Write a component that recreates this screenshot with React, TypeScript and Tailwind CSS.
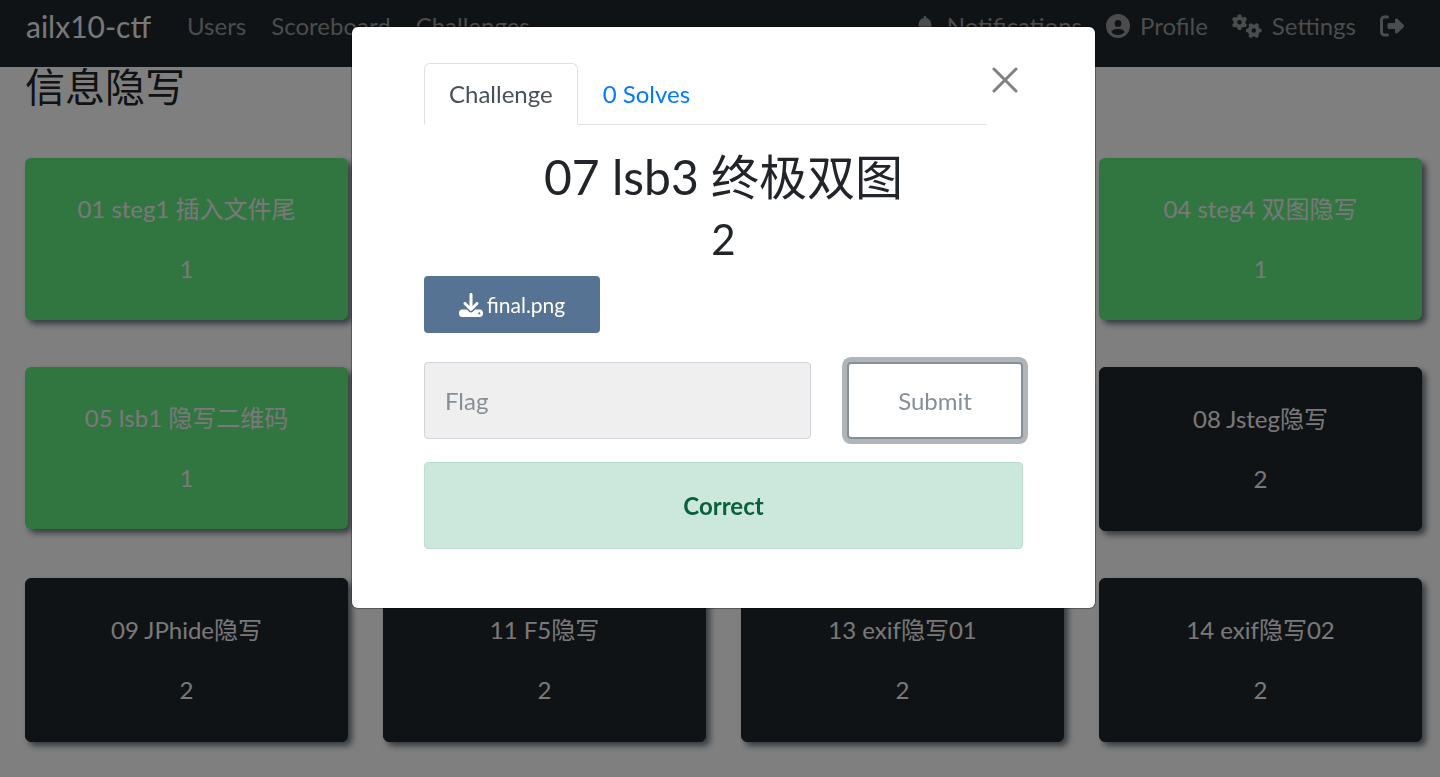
import React from "react";
import {
  FaBell,
  FaCircleUser,
  FaDownload,
  FaGears,
  FaRightFromBracket,
} from "react-icons/fa6";

type Challenge = {
  name: string;
  value: number;
  solved?: boolean;
  place?: string;
};

const challenges: Challenge[] = [
  { name: "01 steg1 插入文件尾", value: 1, solved: true },
  { name: "04 steg4 双图隐写", value: 1, solved: true, place: "col-start-4" },
  { name: "05 lsb1 隐写二维码", value: 1, solved: true },
  { name: "08 Jsteg隐写", value: 2, place: "col-start-4" },
  { name: "09 JPhide隐写", value: 2 },
  { name: "11 F5隐写", value: 2 },
  { name: "13 exif隐写01", value: 2 },
  { name: "14 exif隐写02", value: 2 },
];

function Navbar() {
  return (
    <nav className="flex h-[67px] items-start justify-between bg-[#1f262a] pr-9 pl-[26px] text-2xl leading-9 text-[#96999b]">
      <div className="flex items-center pt-2">
        <a href="#home" className="mr-6 text-[30px] text-[#f0f0f0]">
          ailx10-ctf
        </a>
        <div className="flex gap-[25px] pl-3">
          <a href="#users">Users</a>
          <a href="#scoreboard">Scoreboard</a>
          <a href="#challenges">Challenges</a>
        </div>
      </div>
      <div className="flex items-center gap-6 pt-2">
        <a href="#notifications" className="flex items-center gap-3">
          <FaBell className="size-5" />
          Notifications
        </a>
        <a href="#profile" className="flex items-center gap-2.5">
          <FaCircleUser />
          Profile
        </a>
        <a href="#settings" className="flex items-center gap-2.5">
          <FaGears className="size-[30px]" />
          Settings
        </a>
        <a href="#logout" aria-label="Logout">
          <FaRightFromBracket />
        </a>
      </div>
    </nav>
  );
}

function ChallengeCard({ name, value, solved, place = "" }: Challenge) {
  const tone = solved ? "bg-[#62ec80]" : "border border-[#1f262a] bg-[#1f262a]";
  return (
    <button
      type="button"
      className={`flex flex-col items-center gap-6 rounded-md py-[33px] text-2xl leading-9 text-[#f4f0f4] shadow-[4px_4px_6px_#6c7680] ${tone} ${place}`}
    >
      <span>{name}</span>
      <span>{value}</span>
    </button>
  );
}

function ChallengeDialog() {
  return (
    <div className="fixed inset-0 flex items-start justify-center bg-black/50 pt-[27px] pl-[7px]">
      <div
        role="dialog"
        aria-modal="true"
        aria-labelledby="challenge-name"
        className="w-full max-w-[743px] rounded-md bg-white px-[72px] pt-9 pb-[59px] text-2xl leading-9 text-[#212529] shadow-[0_0_0_1px_rgba(0,0,0,0.3)]"
      >
        <div className="flex items-start">
          <div role="tablist" className="flex flex-1 border-b border-[#dee2e6]">
            <button
              type="button"
              role="tab"
              aria-selected="true"
              className="-mb-px rounded-t-md border border-b-white border-[#dee2e6] px-6 py-3 text-[#495057]"
            >
              Challenge
            </button>
            <button
              type="button"
              role="tab"
              aria-selected="false"
              className="px-[25px] py-3 text-[#007bff]"
            >
              0 Solves
            </button>
          </div>
          <button type="button" aria-label="Close" className="flex w-9 justify-center pt-1">
            <svg viewBox="0 0 26 26" className="size-[26px]" fill="none" stroke="#808080" strokeWidth="3" strokeLinecap="round">
              <path d="M2 2L24 24M24 2L2 24" />
            </svg>
          </button>
        </div>

        <h2 id="challenge-name" className="pt-[22px] text-center text-5xl leading-[60px]">
          07 lsb3 终极双图
        </h2>
        <p className="pt-px pb-[5px] text-center text-[42px] leading-[63px]">2</p>

        <a
          href="#final.png"
          className="flex h-[57px] w-44 items-center justify-center gap-1 rounded-sm bg-[#577393] text-[21px] text-white"
        >
          <FaDownload className="size-6" />
          final.png
        </a>

        <div className="flex gap-9 pt-[29px]">
          <input
            type="text"
            aria-label="Flag"
            placeholder="Flag"
            className="h-[77px] min-w-0 flex-1 rounded-sm border border-[#ced4da] bg-[#efefef] px-5 placeholder:text-[#868e96]"
          />
          <button
            type="button"
            className="h-[77px] w-44 rounded-sm border-2 border-[#868e96] bg-white text-[#868e96] shadow-[0_0_0_5px_#b0b5ba]"
          >
            Submit
          </button>
        </div>

        <div
          role="alert"
          className="mt-[23px] rounded-sm border border-[#badfcf] bg-[#cce8dc] pt-[25px] pb-6 text-center font-bold text-[#0a5f3c]"
        >
          Correct
        </div>
      </div>
    </div>
  );
}

export default function App() {
  return (
    <div className="min-h-screen bg-white font-['Lato','Noto_Sans_CJK_SC',sans-serif]">
      <Navbar />
      <main className="pr-[18px] pb-8 pl-[25px]">
        <h1 className="pb-[51px] text-[40px] leading-10 text-[#212529]">信息隐写</h1>
        <div className="grid grid-cols-4 items-start gap-x-[35px] gap-y-[47px]">
          {challenges.map((challenge) => (
            <ChallengeCard key={challenge.name} {...challenge} />
          ))}
        </div>
      </main>
      <ChallengeDialog />
    </div>
  );
}
